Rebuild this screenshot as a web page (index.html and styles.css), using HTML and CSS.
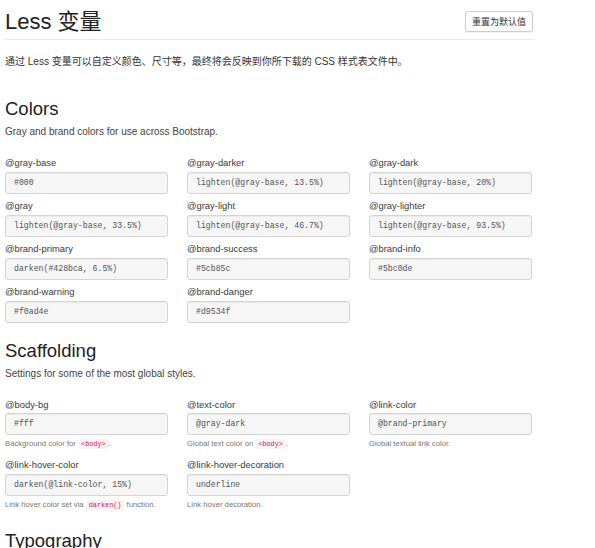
FILE: index.html
```html
<!DOCTYPE html>
<html lang="zh-CN">
<head>
<meta charset="utf-8">
<title>Less 变量</title>
<link rel="stylesheet" href="styles.css">
</head>
<body>
<div class="page">
  <div class="page-header">
    <h1 class="title">Less 变量</h1>
    <button class="btn-reset" type="button">重置为默认值</button>
  </div>
  <p class="intro">通过 Less 变量可以自定义颜色、尺寸等，最终将会反映到你所下载的 CSS 样式表文件中。</p>

  <section class="section section-first">
    <h2 class="section-title">Colors</h2>
    <p class="section-desc">Gray and brand colors for use across Bootstrap.</p>
    <div class="var-grid">
      <div class="var"><label class="var-label">@gray-base</label><div class="var-input">#000</div></div>
      <div class="var"><label class="var-label">@gray-darker</label><div class="var-input">lighten(@gray-base, 13.5%)</div></div>
      <div class="var"><label class="var-label">@gray-dark</label><div class="var-input">lighten(@gray-base, 20%)</div></div>
      <div class="var"><label class="var-label">@gray</label><div class="var-input">lighten(@gray-base, 33.5%)</div></div>
      <div class="var"><label class="var-label">@gray-light</label><div class="var-input">lighten(@gray-base, 46.7%)</div></div>
      <div class="var"><label class="var-label">@gray-lighter</label><div class="var-input">lighten(@gray-base, 93.5%)</div></div>
      <div class="var"><label class="var-label">@brand-primary</label><div class="var-input">darken(#428bca, 6.5%)</div></div>
      <div class="var"><label class="var-label">@brand-success</label><div class="var-input">#5cb85c</div></div>
      <div class="var"><label class="var-label">@brand-info</label><div class="var-input">#5bc0de</div></div>
      <div class="var"><label class="var-label">@brand-warning</label><div class="var-input">#f0ad4e</div></div>
      <div class="var"><label class="var-label">@brand-danger</label><div class="var-input">#d9534f</div></div>
    </div>
  </section>

  <section class="section">
    <h2 class="section-title">Scaffolding</h2>
    <p class="section-desc">Settings for some of the most global styles.</p>
    <div class="var-grid">
      <div class="var"><label class="var-label">@body-bg</label><div class="var-input">#fff</div><p class="help">Background color for <code>&lt;body&gt;</code>.</p></div>
      <div class="var"><label class="var-label">@text-color</label><div class="var-input">@gray-dark</div><p class="help">Global text color on <code>&lt;body&gt;</code>.</p></div>
      <div class="var"><label class="var-label">@link-color</label><div class="var-input">@brand-primary</div><p class="help">Global textual link color.</p></div>
      <div class="var"><label class="var-label">@link-hover-color</label><div class="var-input">darken(@link-color, 15%)</div><p class="help">Link hover color set via <code>darken()</code> function.</p></div>
      <div class="var"><label class="var-label">@link-hover-decoration</label><div class="var-input">underline</div><p class="help">Link hover decoration.</p></div>
    </div>
  </section>

  <section class="section">
    <h2 class="section-title">Typography</h2>
  </section>
</div>
</body>
</html>
```

FILE: styles.css
```css
html, body {
  margin: 0;
  padding: 0;
  background: #fff;
}

body {
  font-family: "Liberation Sans", Arial, "Noto Sans CJK SC", sans-serif;
  color: #333;
  overflow: hidden;
}

.page {
  width: 528px;
  padding: 0 5px;
}

.page-header {
  display: flex;
  align-items: center;
  justify-content: space-between;
  height: 40px;
  box-sizing: border-box;
  padding-top: 4px;
  border-bottom: 1px solid #eaeaea;
}

.title {
  margin: 0;
  font-size: 22px;
  line-height: 26px;
  font-weight: normal;
  color: #222;
}

.btn-reset {
  height: 21px;
  padding: 0 6px;
  font-family: "Liberation Sans", "Noto Sans CJK SC", sans-serif;
  font-size: 9px;
  color: #333;
  background: #fff;
  border: 1px solid #ccc;
  border-radius: 3px;
  box-shadow: 0 1px 1px rgba(0, 0, 0, 0.06);
}

.intro {
  margin: 15px 0 0;
  font-size: 10px;
  line-height: 14px;
  color: #333;
}

.section {
  margin-top: 17px;
}

.section-first {
  margin-top: 29px;
}

.section-title {
  margin: 0;
  font-size: 18.5px;
  line-height: 22px;
  font-weight: normal;
  color: #222;
}

.section-desc {
  margin: 5px 0 0;
  font-size: 10px;
  line-height: 14px;
  color: #444;
}

.var-grid {
  display: grid;
  grid-template-columns: repeat(3, 163px);
  column-gap: 19px;
  row-gap: 5.5px;
  margin-top: 17px;
}

.var-label {
  display: block;
  font-size: 9.4px;
  line-height: 13px;
  margin-bottom: 2.5px;
  color: #3a3a3a;
}

.var-input {
  height: 22px;
  box-sizing: border-box;
  padding: 0 8px;
  border: 1px solid #d4d4d4;
  border-radius: 3px;
  background: #f6f6f6;
  box-shadow: inset 0 1px 1px rgba(0, 0, 0, 0.05);
  font-family: "Liberation Mono", "DejaVu Sans Mono", monospace;
  font-size: 8.2px;
  line-height: 20px;
  color: #555;
  white-space: nowrap;
  overflow: hidden;
}

.help {
  margin: 3px 0 2.5px;
  font-size: 7.7px;
  line-height: 11px;
  color: #777;
}

code {
  font-family: "Liberation Mono", "DejaVu Sans Mono", monospace;
  font-size: 6.8px;
  padding: 1px 3px;
  color: #c7254e;
  background: #f9f2f4;
  border-radius: 2px;
}
```
